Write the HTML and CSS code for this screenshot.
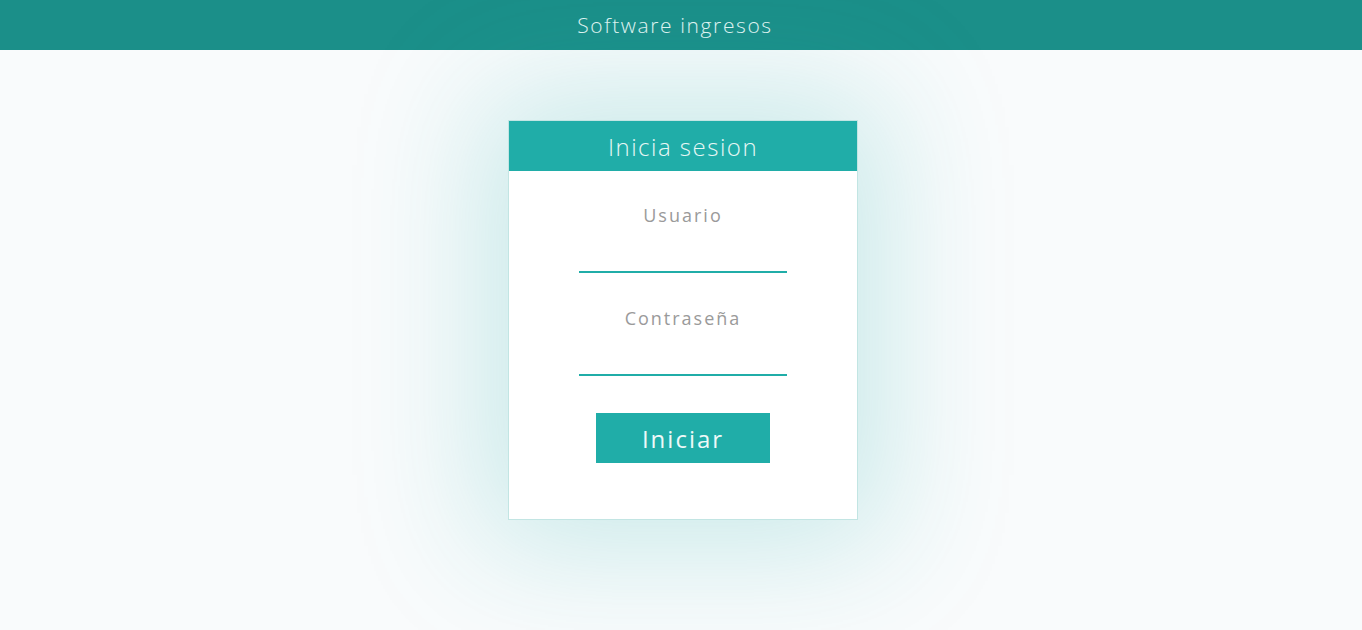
FILE: index.html
```html
<!DOCTYPE html>
<html lang="es">
<head>
<meta charset="utf-8">
<title>Software ingresos</title>
<link rel="stylesheet" href="styles.css">
</head>
<body>
<header class="topbar">Software ingresos</header>
<main class="page">
  <form class="card">
    <div class="card-head">Inicia sesion</div>
    <div class="card-body">
      <label class="field-label" for="u">Usuario</label>
      <input class="field" id="u" type="text">
      <label class="field-label second" for="p">Contraseña</label>
      <input class="field" id="p" type="password">
      <button class="btn" type="button">Iniciar</button>
    </div>
  </form>
</main>
</body>
</html>
```
FILE: styles.css
```css
html, body {
  margin: 0;
  padding: 0;
  height: 100%;
}
body {
  background: #f9fbfc;
  font-family: "Segoe UI", "Open Sans", "Noto Sans", sans-serif;
  overflow: hidden;
}
.topbar {
  height: 50px;
  background: #1b8f89;
  color: #e3f6f4;
  font-size: 21px;
  font-weight: 300;
  letter-spacing: 1.6px;
  display: flex;
  align-items: center;
  justify-content: center;
  padding-right: 12px;
  box-sizing: border-box;
}
.page {
  display: flex;
  justify-content: center;
  padding-top: 70px;
  padding-left: 4px;
}
.card {
  width: 348px;
  background: #fff;
  border: 1px solid #c2e5e3;
  box-shadow: 0 0 120px 26px rgba(32, 173, 168, 0.22);
  margin: 0;
}
.card-head {
  height: 50px;
  background: #20ada8;
  color: #e6f7f5;
  font-size: 24px;
  font-weight: 300;
  letter-spacing: 1.5px;
  display: flex;
  align-items: center;
  justify-content: center;
}
.card-body {
  display: flex;
  flex-direction: column;
  align-items: center;
  padding: 32px 0 56px;
}
.field-label {
  font-size: 18px;
  line-height: 24px;
  color: #9a9a9a;
  letter-spacing: 2px;
  font-weight: 400;
}
.field-label.second {
  margin-top: 33px;
}
.field {
  width: 208px;
  height: 46px;
  box-sizing: border-box;
  border: none;
  border-bottom: 2px solid #20ada8;
  outline: none;
  background: transparent;
  font: inherit;
}
.btn {
  margin-top: 37px;
  width: 174px;
  height: 50px;
  border: none;
  background: #20ada8;
  color: #eef9f8;
  font-family: inherit;
  font-size: 24px;
  letter-spacing: 2px;
  cursor: pointer;
}
```
